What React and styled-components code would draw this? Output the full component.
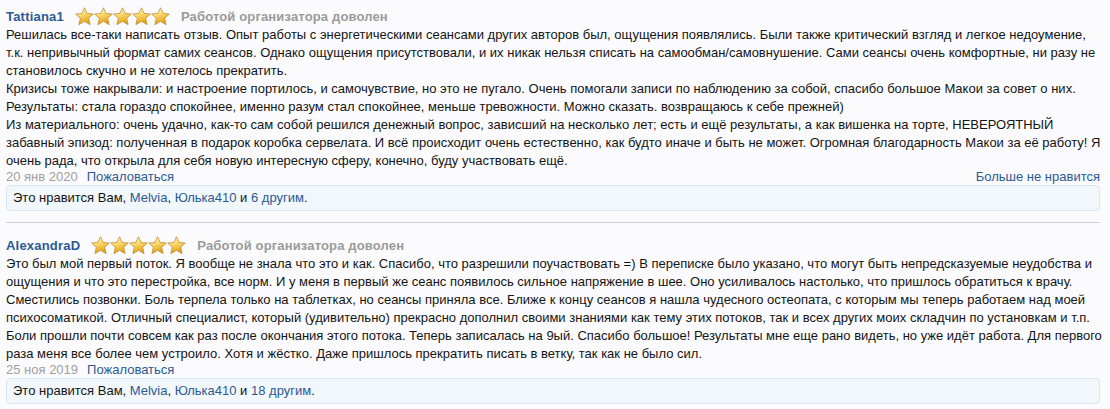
import React from "react";
import styled, { createGlobalStyle } from "styled-components";

const GlobalStyle = createGlobalStyle`
  html, body {
    margin: 0;
    padding: 0;
    background: #fbfbfe;
  }
  body {
    font-family: "Liberation Sans", Arial, sans-serif;
    font-size: 13px;
    color: #141414;
  }
`;

const Page = styled.div`
  padding: 0 10px 0 6px;
`;

const Post = styled.div`
  padding: 6px 0 11px;
  border-bottom: 1px solid #c9d3de;
  margin-bottom: 6px;
`;

const Header = styled.div`
  display: flex;
  align-items: center;
  height: 20px;
`;

const User = styled.a`
  font-weight: bold;
  color: #2c5a94;
  text-decoration: none;
  letter-spacing: 0.2px;
  margin-right: 11px;
`;

const Stars = styled.span`
  display: inline-flex;
  margin-right: 11px;
`;

const Verdict = styled.span`
  font-weight: bold;
  color: #9a9a9a;
  letter-spacing: 0.15px;
`;

const Body = styled.div`
  line-height: 18px;
  margin-right: -6px;
`;

const Meta = styled.div`
  display: flex;
  align-items: center;
  height: 16px;
  margin-top: -2px;
  gap: 9px;
`;

const Date = styled.span`
  color: #a0a0a0;
`;

const Link = styled.a`
  color: #2c5a94;
  text-decoration: none;
  margin-left: ${(p) => (p.$right ? "auto" : "0")};
`;

const Likes = styled.div`
  margin-top: 1px;
  background: #f2f7fc;
  border: 1px solid #d6e7f7;
  border-radius: 4px;
  padding: 4px 6px;
  line-height: 16px;
`;

const Star = ({ id }) => (
  <svg width="19" height="19" viewBox="0 0 20 20">
    <defs>
      <linearGradient id={id} x1="0" y1="0" x2="0.3" y2="1">
        <stop offset="0" stopColor="#fffce0" />
        <stop offset="0.4" stopColor="#ffe27e" />
        <stop offset="1" stopColor="#e3a012" />
      </linearGradient>
    </defs>
    <path
      d="M10 0.8 L12.8 6.8 L19.3 7.4 L14.4 11.8 L15.9 18.6 L10 15.1 L4.1 18.6 L5.6 11.8 L0.7 7.4 L7.2 6.8 Z"
      fill={`url(#${id})`}
      stroke="#b98a34"
      strokeWidth="0.8"
      strokeLinejoin="round"
    />
  </svg>
);

const Rating = ({ name }) => (
  <Stars>
    {[0, 1, 2, 3, 4].map((i) => (
      <Star key={i} id={`${name}-s${i}`} />
    ))}
  </Stars>
);

const posts = [
  {
    user: "Tattiana1",
    date: "20 янв 2020",
    others: "6 другим",
    text: [
      "Решилась все-таки написать отзыв. Опыт работы с энергетическими сеансами других авторов был, ощущения появлялись. Были также критический взгляд и легкое недоумение, т.к. непривычный формат самих сеансов. Однако ощущения присутствовали, и их никак нельзя списать на самообман/самовнушение. Сами сеансы очень комфортные, ни разу не становилось скучно и не хотелось прекратить.",
      "Кризисы тоже накрывали: и настроение портилось, и самочувствие, но это не пугало. Очень помогали записи по наблюдению за собой, спасибо большое Макои за совет о них.",
      "Результаты: стала гораздо спокойнее, именно разум стал спокойнее, меньше тревожности. Можно сказать. возвращаюсь к себе прежней)",
      "Из материального: очень удачно, как-то сам собой решился денежный вопрос, зависший на несколько лет; есть и ещё результаты, а как вишенка на торте, НЕВЕРОЯТНЫЙ забавный эпизод: полученная в подарок коробка сервелата. И всё происходит очень естественно, как будто иначе и быть не может. Огромная благодарность Макои за её работу! Я очень рада, что открыла для себя новую интересную сферу, конечно, буду участвовать ещё.",
    ],
  },
  {
    user: "AlexandraD",
    date: "25 ноя 2019",
    others: "18 другим",
    text: [
      "Это был мой первый поток. Я вообще не знала что это и как. Спасибо, что разрешили поучаствовать =) В переписке было указано, что могут быть непредсказуемые неудобства и ощущения и что это перестройка, все норм. И у меня в первый же сеанс появилось сильное напряжение в шее. Оно усиливалось настолько, что пришлось обратиться к врачу. Сместились позвонки. Боль терпела только на таблетках, но сеансы приняла все. Ближе к концу сеансов я нашла чудесного остеопата, с которым мы теперь работаем над моей психосоматикой. Отличный специалист, который (удивительно) прекрасно дополнил своими знаниями как тему этих потоков, так и всех других моих складчин по установкам и т.п. Боли прошли почти совсем как раз после окончания этого потока. Теперь записалась на 9ый. Спасибо большое! Результаты мне еще рано видеть, но уже идёт работа. Для первого раза меня все более чем устроило. Хотя и жёстко. Даже пришлось прекратить писать в ветку, так как не было сил.",
    ],
  },
];

export default function App() {
  return (
    <>
      <GlobalStyle />
      <Page>
        {posts.map((p, idx) => (
          <Post key={p.user}>
            <Header>
              <User href="#">{p.user}</User>
              <Rating name={`r${idx}`} />
              <Verdict>Работой организатора доволен</Verdict>
            </Header>
            <Body>
              {p.text.map((t, i) => (
                <div key={i}>{t}</div>
              ))}
            </Body>
            <Meta>
              <Date>{p.date}</Date>
              <Link href="#">Пожаловаться</Link>
              {idx === 0 && (
                <Link href="#" $right>
                  Больше не нравится
                </Link>
              )}
            </Meta>
            <Likes>
              Это нравится Вам, <Link href="#">Melvia</Link>,{" "}
              <Link href="#">Юлька410</Link> и <Link href="#">{p.others}</Link>.
            </Likes>
          </Post>
        ))}
      </Page>
    </>
  );
}
